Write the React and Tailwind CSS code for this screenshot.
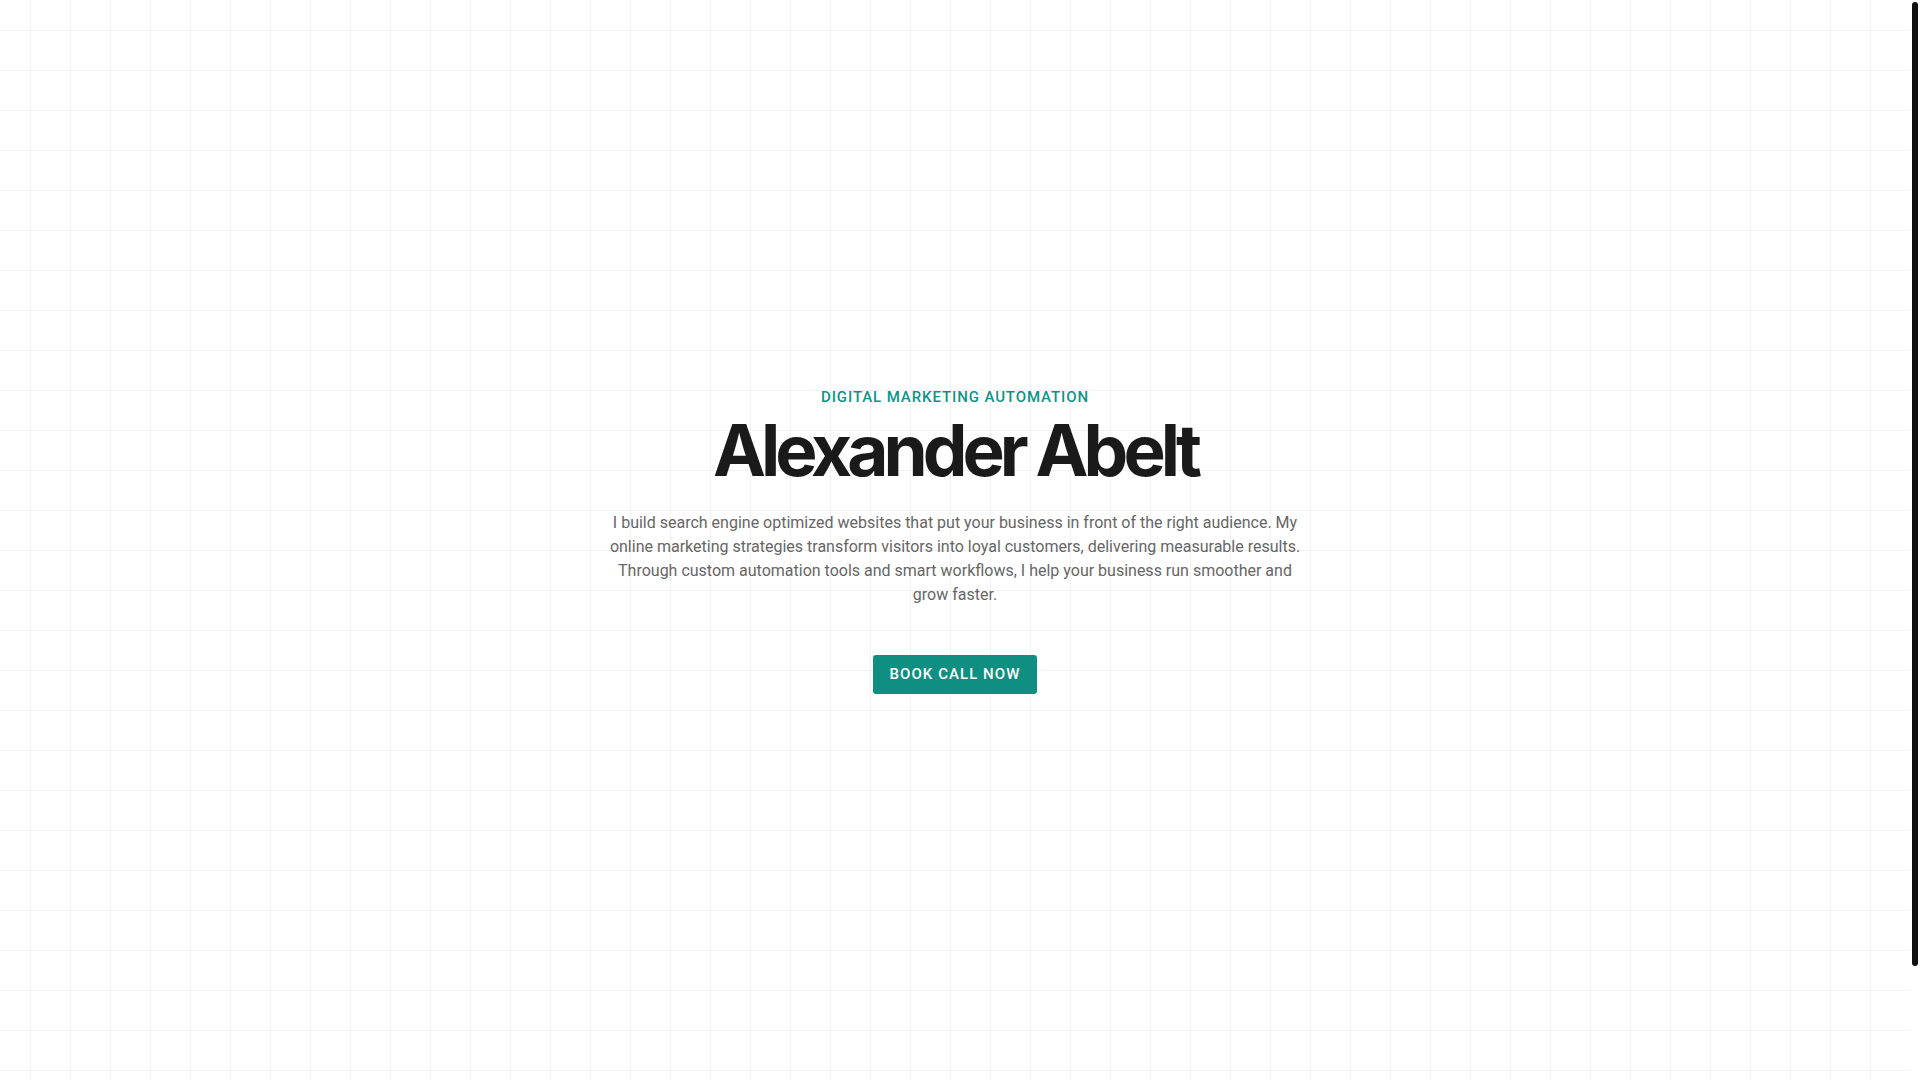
export default function App() {
  return (
    <div
      className="flex h-screen overflow-hidden bg-white"
      style={{ fontFamily: 'Roboto, "Liberation Sans", sans-serif' }}
    >
      <main className="flex-1 bg-[linear-gradient(to_right,#f2f2f2_1px,transparent_1px),linear-gradient(to_bottom,#f2f2f2_1px,transparent_1px)] [background-size:40px_40px] [background-position:30px_30px]">
        {/* hero */}
        <section className="flex h-[1080px] flex-col items-center justify-center px-6 text-center">
          <p className="text-[15px] font-medium uppercase leading-[22px] tracking-[0.06em] text-[#0d9488]">
            Digital Marketing Automation
          </p>
          <h1 className="mt-0.5 font-['Inter',sans-serif] text-[71px] font-bold leading-[1.15] tracking-[-0.07em] text-[#1a1a1a]">
            Alexander Abelt
          </h1>
          <p className="mt-[19px] max-w-[710px] text-base leading-6 text-[#666666]">
            I build search engine optimized websites that put your business in front of the right audience. My online
            marketing strategies transform visitors into loyal customers, delivering measurable results. Through custom
            automation tools and smart workflows, I help your business run smoother and grow faster.
          </p>
          <button className="mt-12 rounded-[3px] bg-[#0e8f82] px-[17px] py-[10px] text-[15px] font-medium uppercase leading-[19px] tracking-[0.07em] text-white">
            Book Call Now
          </button>
        </section>
      </main>

      {/* scrollbar */}
      <div className="w-[10px] shrink-0 bg-white px-[2px] pt-[2px]">
        <div className="h-[964px] rounded-[3px] bg-[#111111]" />
      </div>
    </div>
  );
}
